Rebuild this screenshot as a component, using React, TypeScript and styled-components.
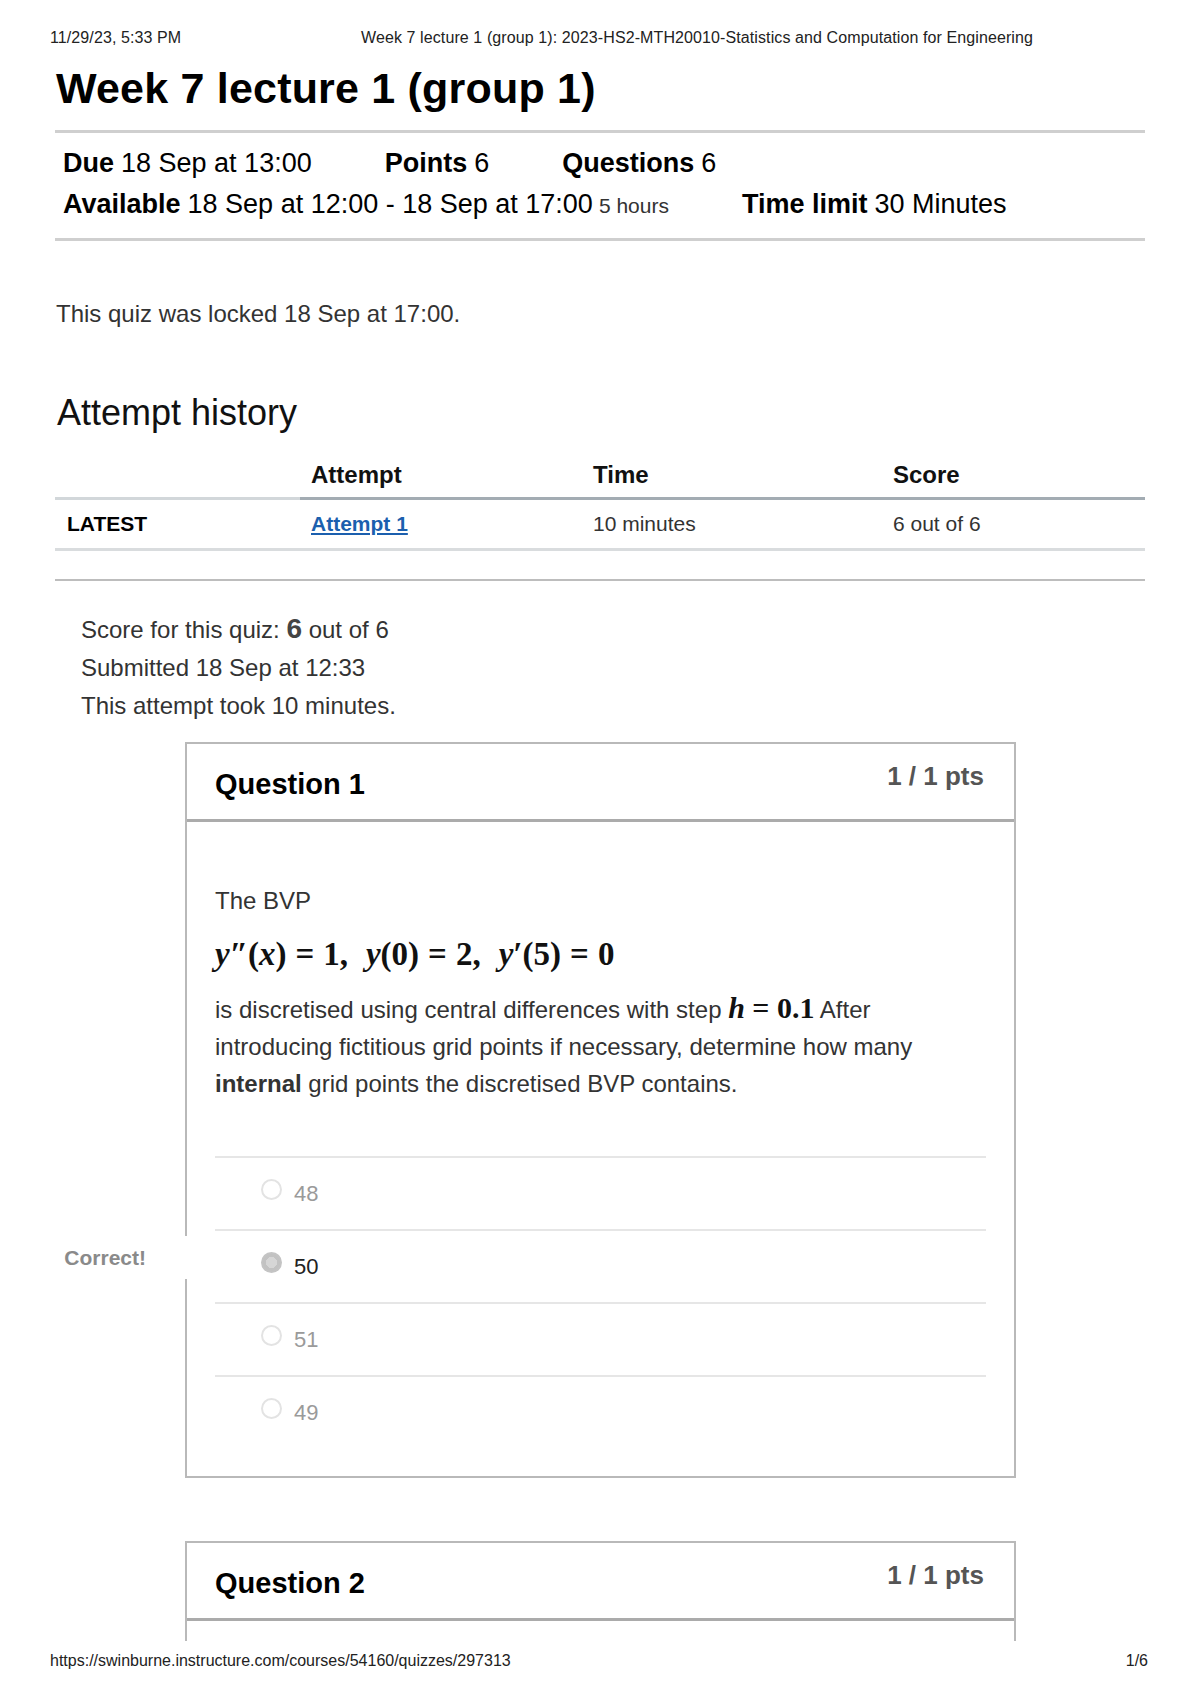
import React from "react";
import styled, { createGlobalStyle } from "styled-components";

const GlobalStyle = createGlobalStyle`
  html, body {
    margin: 0;
    padding: 0;
    background: #ffffff;
  }
  body {
    font-family: "Liberation Sans", Arial, sans-serif;
    color: #2b2b2b;
  }
`;

const Sheet = styled.div`
  width: 1200px;
  height: 1698px;
  background: #fff;
  overflow: hidden;
`;

const PrintHeader = styled.div`
  display: grid;
  grid-template-columns: 311px auto;
  padding: 28px 0 0 50px;
  font-size: 16px;
  line-height: 20px;
  letter-spacing: 0.1px;
  color: #222;
`;

const Content = styled.main`
  height: 1593px;
  overflow: hidden;
  padding: 0 55px;
`;

const Title = styled.h1`
  margin: 15px 0 17px 1px;
  font-size: 43px;
  line-height: 50px;
  font-weight: 700;
  letter-spacing: 0.2px;
  color: #000;
`;

const InfoBlock = styled.div`
  border-top: 3px solid #cfcfcf;
  border-bottom: 3px solid #cfcfcf;
  padding: 10px 0 12px 8px;
`;

const InfoRow = styled.div`
  display: flex;
  gap: 73px;
  font-size: 27px;
  line-height: 41px;
  color: #000;
  white-space: nowrap;
`;

const InfoLabel = styled.b`
  font-weight: 700;
  margin-right: 7px;
`;

const InfoSmall = styled.span`
  font-size: 21px;
  margin-left: 6px;
  color: #333;
`;

const LockNote = styled.p`
  margin: 58px 0 0 1px;
  font-size: 24px;
  line-height: 30px;
  color: #333;
`;

const SectionTitle = styled.h2`
  margin: 62px 0 0 2px;
  font-size: 36px;
  line-height: 44px;
  font-weight: 400;
  color: #111;
`;

const HistoryTable = styled.div`
  display: grid;
  grid-template-columns: 245px 282px 300px 1fr;
  margin-top: 26px;
`;

const HeadCell = styled.div<{ $muted?: boolean }>`
  padding: 0 0 8px 11px;
  font-size: 24px;
  line-height: 28px;
  font-weight: 700;
  color: #111;
  border-bottom: 3px solid ${({ $muted }) => ($muted ? "#d2d7da" : "#a3acb3")};
`;

const BodyCell = styled.div<{ $strong?: boolean }>`
  padding: 12px 0 12px ${({ $strong }) => ($strong ? "12px" : "11px")};
  font-size: 21px;
  line-height: 24px;
  font-weight: ${({ $strong }) => ($strong ? 700 : 400)};
  color: ${({ $strong }) => ($strong ? "#000" : "#333")};
  border-bottom: 3px solid #d9dcde;
`;

const AttemptLink = styled.a`
  color: #1b5fae;
  font-weight: 700;
  text-decoration: underline;
  text-underline-offset: 2px;
`;

const Rule = styled.hr`
  margin: 28px 0 0;
  border: 0;
  border-top: 2px solid #bdbdbd;
`;

const ScoreSummary = styled.div`
  margin-top: 29px;
  padding-left: 26px;
  font-size: 24px;
  line-height: 38px;
  color: #333;
`;

const ScoreValue = styled.b`
  font-size: 28px;
  font-weight: 700;
  color: #444;
`;

const QuestionCard = styled.section<{ $gap: number }>`
  margin: ${({ $gap }) => $gap}px 0 0 130px;
  width: 831px;
  box-sizing: border-box;
  border: 2px solid #b9b9b9;
`;

const QuestionHeader = styled.header`
  display: flex;
  justify-content: space-between;
  align-items: flex-start;
  height: 75px;
  padding: 0 30px 0 28px;
  border-bottom: 3px solid #ababab;
  box-sizing: content-box;
`;

const QuestionName = styled.h3`
  margin: 23px 0 0;
  font-size: 29px;
  line-height: 34px;
  font-weight: 700;
  color: #000;
`;

const Points = styled.div`
  margin-top: 17px;
  font-size: 26px;
  line-height: 30px;
  font-weight: 700;
  color: #555;
`;

const QuestionBody = styled.div<{ $empty?: boolean }>`
  padding: 60px 28px 28px;
  min-height: ${({ $empty }) => ($empty ? "160px" : "0")};
`;

const Prose = styled.p`
  margin: 0;
  font-size: 24px;
  line-height: 37px;
  color: #333;
`;

const MathLine = styled.div`
  margin: 10px 0 12px;
  line-height: 50px;
  font-family: "Liberation Serif", "DejaVu Serif", serif;
  font-size: 33px;
  font-weight: 700;
  color: #111;
  white-space: nowrap;
`;

const MathVar = styled.i`
  font-style: italic;
  font-weight: 700;
`;

const MathOp = styled.span`
  margin: 0 9px;
`;

const MathSep = styled.span`
  margin-right: 18px;
`;

const InlineMath = styled.span`
  font-family: "Liberation Serif", "DejaVu Serif", serif;
  font-size: 30px;
  line-height: 1;
  font-weight: 700;
  color: #111;
`;

const AnswerList = styled.div`
  margin-top: 54px;
`;

const AnswerRow = styled.div`
  position: relative;
  display: flex;
  align-items: center;
  gap: 12px;
  height: 71px;
  padding: 0 0 0 46px;
  border-top: 2px solid #e6e6e6;
`;

const Radio = styled.span<{ $checked?: boolean }>`
  width: 17px;
  height: 17px;
  border-radius: 50%;
  border: 2px solid ${({ $checked }) => ($checked ? "#c4c4c4" : "#e3e3e3")};
  background: ${({ $checked }) =>
    $checked ? "radial-gradient(circle, #d6d6d6 0 45%, #c2c2c2 46%)" : "#fff"};
  margin-top: -8px;
`;

const AnswerText = styled.span<{ $checked?: boolean }>`
  font-size: 22px;
  line-height: 26px;
  color: ${({ $checked }) => ($checked ? "#222" : "#9a9a9a")};
`;

const CorrectFlag = styled.div`
  position: absolute;
  top: 5px;
  right: calc(100% + 25px);
  width: 140px;
  height: 43px;
  box-sizing: border-box;
  padding-right: 44px;
  display: flex;
  align-items: center;
  justify-content: flex-end;
  background: #fff;
  font-size: 21px;
  font-weight: 700;
  color: #8a8a8a;
`;

const PrintFooter = styled.div`
  display: flex;
  justify-content: space-between;
  padding: 10px 52px 0 50px;
  font-size: 16px;
  line-height: 20px;
  color: #222;
`;

const answers = [
  { value: "48" },
  { value: "50", picked: true },
  { value: "51" },
  { value: "49" },
];

const App = () => {
  return (
    <>
      <GlobalStyle />
      <Sheet>
        <PrintHeader>
          <span>11/29/23, 5:33 PM</span>
          <span>
            Week 7 lecture 1 (group 1): 2023-HS2-MTH20010-Statistics and Computation for Engineering
          </span>
        </PrintHeader>

        <Content>
          <Title>Week 7 lecture 1 (group 1)</Title>

          <InfoBlock>
            <InfoRow>
              <span>
                <InfoLabel>Due</InfoLabel>18 Sep at 13:00
              </span>
              <span>
                <InfoLabel>Points</InfoLabel>6
              </span>
              <span>
                <InfoLabel>Questions</InfoLabel>6
              </span>
            </InfoRow>
            <InfoRow>
              <span>
                <InfoLabel>Available</InfoLabel>18 Sep at 12:00 - 18 Sep at 17:00
                <InfoSmall>5 hours</InfoSmall>
              </span>
              <span>
                <InfoLabel>Time limit</InfoLabel>30 Minutes
              </span>
            </InfoRow>
          </InfoBlock>

          <LockNote>This quiz was locked 18 Sep at 17:00.</LockNote>

          <SectionTitle>Attempt history</SectionTitle>
          <HistoryTable>
            <HeadCell $muted />
            <HeadCell>Attempt</HeadCell>
            <HeadCell>Time</HeadCell>
            <HeadCell>Score</HeadCell>
            <BodyCell $strong>LATEST</BodyCell>
            <BodyCell>
              <AttemptLink href="#">Attempt 1</AttemptLink>
            </BodyCell>
            <BodyCell>10 minutes</BodyCell>
            <BodyCell>6 out of 6</BodyCell>
          </HistoryTable>

          <Rule />

          <ScoreSummary>
            <div>
              Score for this quiz: <ScoreValue>6</ScoreValue> out of 6
            </div>
            <div>Submitted 18 Sep at 12:33</div>
            <div>This attempt took 10 minutes.</div>
          </ScoreSummary>

          <QuestionCard $gap={17}>
            <QuestionHeader>
              <QuestionName>Question 1</QuestionName>
              <Points>1 / 1 pts</Points>
            </QuestionHeader>
            <QuestionBody>
              <Prose>The BVP</Prose>
              <MathLine>
                <MathVar>y</MathVar>″(<MathVar>x</MathVar>)<MathOp>=</MathOp>1,
                <MathSep />
                <MathVar>y</MathVar>(0)<MathOp>=</MathOp>2,
                <MathSep />
                <MathVar>y</MathVar>′(5)<MathOp>=</MathOp>0
              </MathLine>
              <Prose>
                is discretised using central differences with step{" "}
                <InlineMath>
                  <MathVar>h</MathVar> = 0.1
                </InlineMath>{" "}
                After introducing fictitious grid points if necessary, determine how many{" "}
                <b>internal</b> grid points the discretised BVP contains.
              </Prose>

              <AnswerList>
                {answers.map((a) => (
                  <AnswerRow key={a.value}>
                    {a.picked && <CorrectFlag>Correct!</CorrectFlag>}
                    <Radio $checked={a.picked} />
                    <AnswerText $checked={a.picked}>{a.value}</AnswerText>
                  </AnswerRow>
                ))}
              </AnswerList>
            </QuestionBody>
          </QuestionCard>

          <QuestionCard $gap={63}>
            <QuestionHeader>
              <QuestionName>Question 2</QuestionName>
              <Points>1 / 1 pts</Points>
            </QuestionHeader>
            <QuestionBody $empty />
          </QuestionCard>
        </Content>

        <PrintFooter>
          <span>https://swinburne.instructure.com/courses/54160/quizzes/297313</span>
          <span>1/6</span>
        </PrintFooter>
      </Sheet>
    </>
  );
};

export default App;
